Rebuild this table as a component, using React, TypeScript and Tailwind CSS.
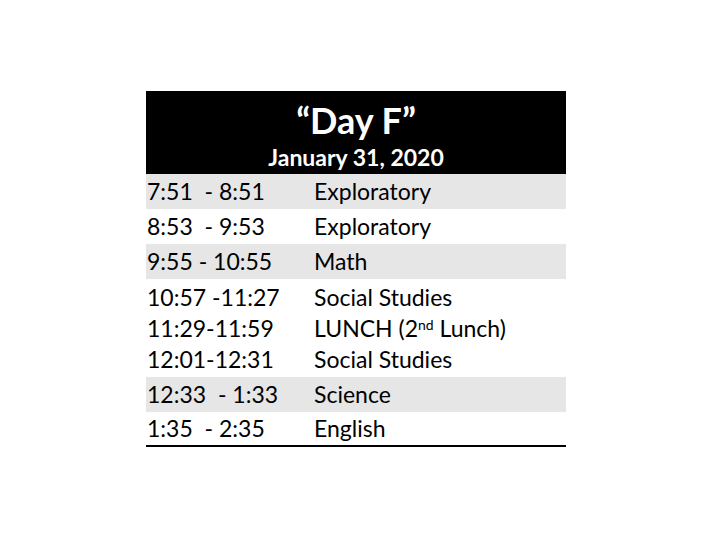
import React from 'react';

const rows = [
  { time: '7:51  - 8:51', subj: 'Exploratory', gray: true },
  { time: '8:53  - 9:53', subj: 'Exploratory', gray: false },
  { time: '9:55 - 10:55', subj: 'Math', gray: true },
];

const App = () => {
  return (
    <div className="w-[720px] h-[540px] bg-white" style={{ fontFamily: 'Lato, "Open Sans", sans-serif' }}>
      <div className="pt-[91px] pl-[146px]">
        <div className="w-[420px] text-black">
          <div className="bg-black text-white h-[83px] flex flex-col items-center font-bold">
            <div className="text-[36px] leading-none mt-[11px]">“Day F”</div>
            <div className="text-[23px] leading-none mt-[8px]">January 31, 2020</div>
          </div>
          {rows.map((r, i) => (
            <div key={i} className={`h-[35px] flex items-center text-[23px] ${r.gray ? 'bg-[#e6e6e6]' : ''}`}>
              <div className="w-[168px] pl-[1px] whitespace-pre">{r.time}</div>
              <div>{r.subj}</div>
            </div>
          ))}
          <div className="h-[98px] flex flex-col justify-center text-[23px] leading-[31px]">
            <div className="flex">
              <div className="w-[168px] pl-[1px]">10:57 -11:27</div>
              <div>Social Studies</div>
            </div>
            <div className="flex">
              <div className="w-[168px] pl-[1px]">11:29-11:59</div>
              <div>LUNCH (2<sup className="text-[14px]">nd</sup> Lunch)</div>
            </div>
            <div className="flex">
              <div className="w-[168px] pl-[1px]">12:01-12:31</div>
              <div>Social Studies</div>
            </div>
          </div>
          <div className="h-[35px] flex items-center text-[23px] bg-[#e6e6e6]">
            <div className="w-[168px] pl-[1px] whitespace-pre">12:33  - 1:33</div>
            <div>Science</div>
          </div>
          <div className="h-[35px] flex items-center text-[23px] border-b-2 border-black">
            <div className="w-[168px] pl-[1px] whitespace-pre">1:35  - 2:35</div>
            <div>English</div>
          </div>
        </div>
      </div>
    </div>
  );
};

export default App;
